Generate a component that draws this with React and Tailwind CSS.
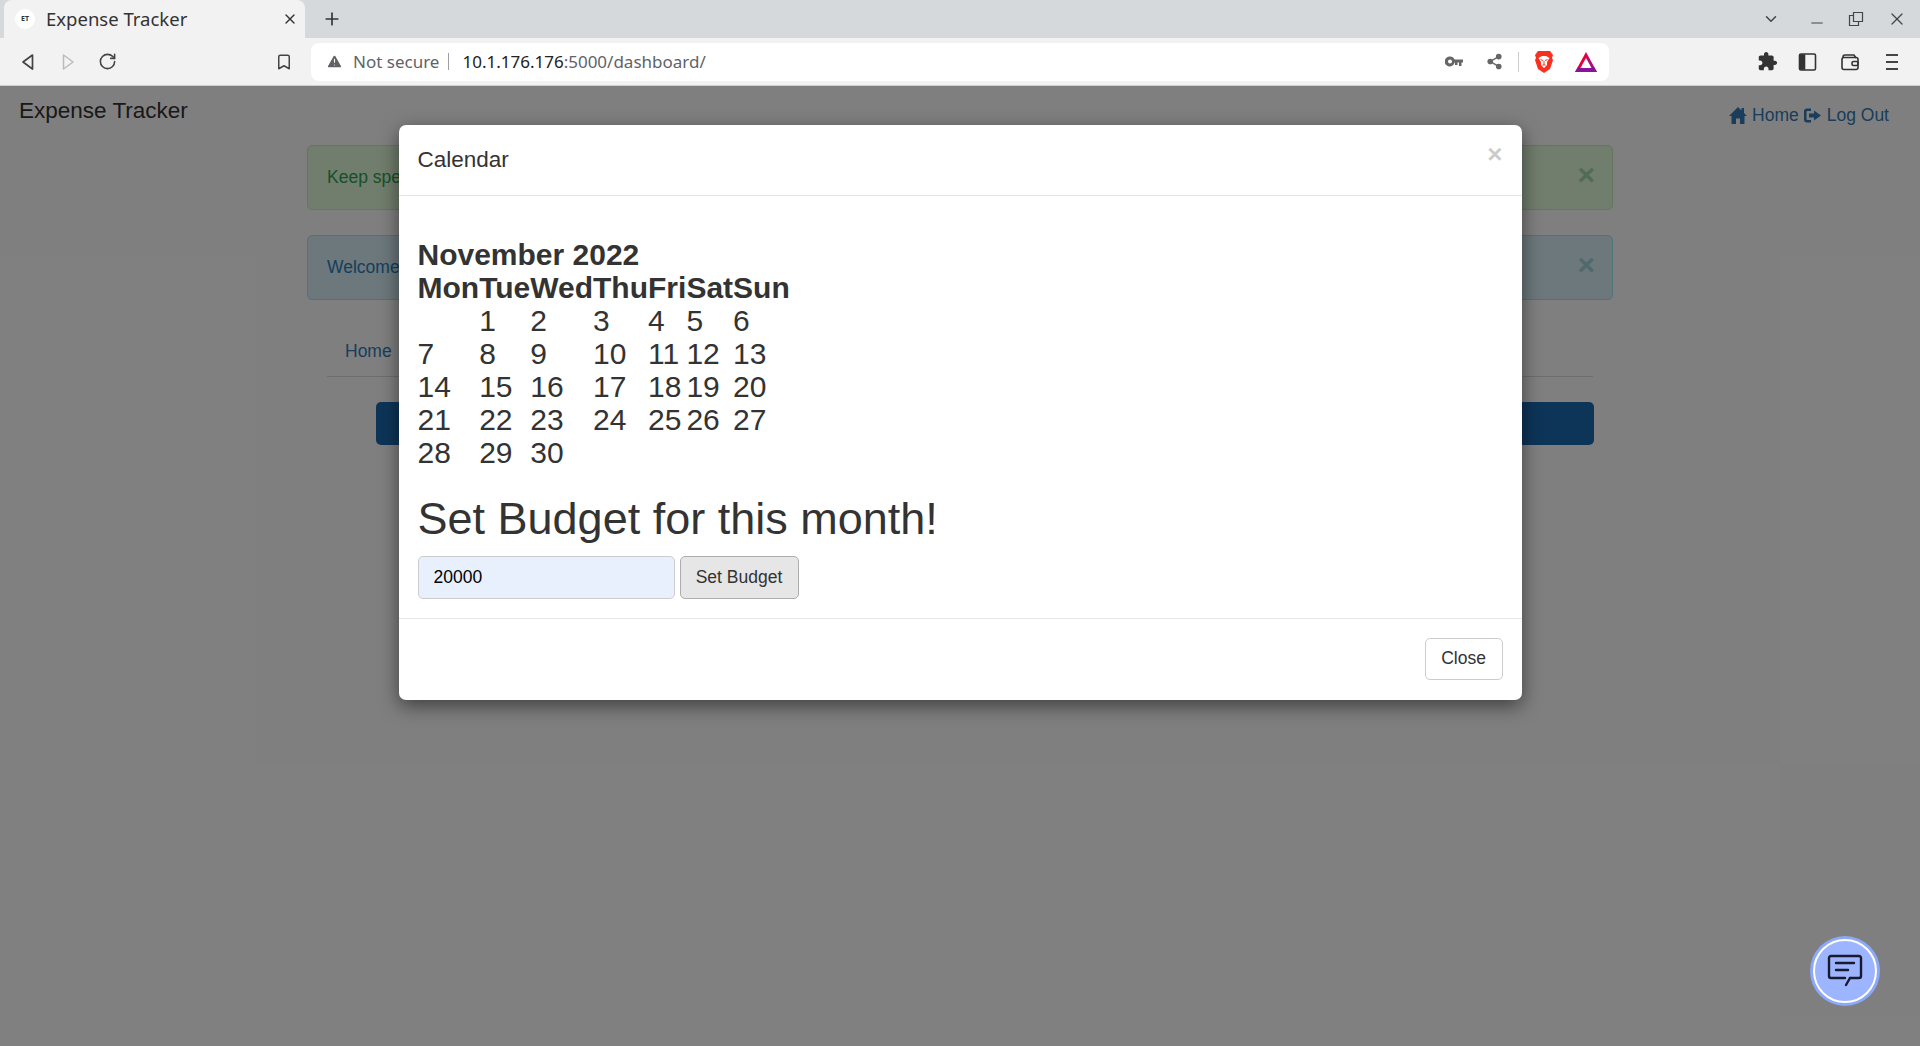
import { ChevronDown, X, Plus, Minus, RotateCw, Bookmark, TriangleAlert, Share2 } from "lucide-react";

const weeks = [
  ["", "1", "2", "3", "4", "5", "6"],
  ["7", "8", "9", "10", "11", "12", "13"],
  ["14", "15", "16", "17", "18", "19", "20"],
  ["21", "22", "23", "24", "25", "26", "27"],
  ["28", "29", "30", "", "", "", ""],
];
const days = ["Mon", "Tue", "Wed", "Thu", "Fri", "Sat", "Sun"];

function BrowserChrome() {
  return (
    <div className="font-['Noto_Sans',sans-serif] text-[#3c4043]">
      {/* Tab strip */}
      <div className="h-[38px] bg-[#d5d9dc] flex items-end">
        <div className="ml-[4px] w-[301px] h-[38px] bg-[#f2f2f2] rounded-t-lg flex items-center pl-[11px] pr-[7px]">
          <div className="w-[20px] h-[20px] rounded-full bg-white flex items-center justify-center text-[7px] font-bold text-[#333]">ET</div>
          <span className="ml-[11px] text-[18.5px] text-[#333] flex-1">Expense Tracker</span>
          <X className="w-[16px] h-[16px] text-[#333]" strokeWidth={2} />
        </div>
        <Plus className="ml-[17px] mb-[9px] w-[20px] h-[20px] text-[#333]" strokeWidth={2} />
        <div className="flex-1" />
        <div className="flex items-center h-[38px] pr-[13px] text-[#444]">
          <ChevronDown className="w-[18px] h-[18px]" strokeWidth={2} />
          <Minus className="ml-[28px] mt-[8px] w-[18px] h-[18px]" strokeWidth={1.5} />
          <svg viewBox="0 0 16 16" className="ml-[22px] w-[16px] h-[16px]" fill="none" stroke="currentColor" strokeWidth="1.2">
            <path d="M5.5 1.5h9v9h-9z" />
            <path d="M5.5 4.5h-4v10h9v-4" />
          </svg>
          <X className="ml-[23px] w-[20px] h-[20px]" strokeWidth={1.5} />
        </div>
      </div>

      {/* Toolbar */}
      <div className="h-[48px] bg-[#f2f2f2] border-b border-[#cfcfcf] flex items-center">
        <svg viewBox="0 0 16 18" className="ml-[20px] w-[16px] h-[18px]" fill="none" stroke="#444" strokeWidth="1.7" strokeLinejoin="round">
          <path d="M12.5 2 3 9l9.5 7z" />
        </svg>
        <svg viewBox="0 0 16 18" className="ml-[24px] w-[16px] h-[18px]" fill="none" stroke="#bbb" strokeWidth="1.5" strokeLinejoin="round">
          <path d="M3.5 2 13 9l-9.5 7z" />
        </svg>
        <RotateCw className="ml-[22px] w-[19px] h-[19px] text-[#444]" strokeWidth={2} />
        <Bookmark className="ml-[158px] w-[18px] h-[18px] text-[#444]" strokeWidth={2} />
        <div className="ml-[18px] w-[1298px] h-[38px] bg-white rounded-lg flex items-center pl-[15px] pr-[11px]">
          <TriangleAlert className="w-[17px] h-[17px] text-white fill-[#5f6368]" strokeWidth={1.5} />
          <span className="ml-[10px] text-[17px] text-[#5f6368]">Not secure</span>
          <span className="ml-[9px] w-px h-[17px] bg-[#9aa0a6]" />
          <span className="ml-[13px] text-[17px] text-[#222]">10.1.176.176<span className="text-[#5f6368]">:5000/dashboard/</span></span>
          <div className="flex-1" />
          <svg viewBox="0 0 18 12" className="w-[18px] h-[12px]" fill="#666">
            <path fillRule="evenodd" d="M5 .5a5 5 0 0 1 4.6 3H18v3h-1.5v3.5h-2.5V6.5h-1.5V9H10V6.5h-.4A5 5 0 1 1 5 .5zm0 3a2 2 0 1 0 0 4 2 2 0 0 0 0-4z" />
          </svg>
          <Share2 className="ml-[23px] w-[17px] h-[17px] text-[#666] fill-[#666]" strokeWidth={2} />
          <span className="ml-[15px] w-px h-[20px] bg-[#ccc]" />
          <svg viewBox="0 0 20 24" className="ml-[15px] w-[20px] h-[24px]">
            <path d="M4 1h12l3 4-1 3 1 2-3 9-6 4-6-4-3-9 1-2-1-3z" fill="#f9301f" />
            <path d="M4.5 8 8 6h4l3.5 2-2.5 4v3l-3 3-3-3v-3z" fill="#fff" />
            <path d="M6.5 9.5l2.5 1M13.5 9.5l-2.5 1M8.5 15h3M10 11v4" stroke="#f9301f" strokeWidth="1" />
          </svg>
          <svg viewBox="0 0 24 22" className="ml-[20px] w-[24px] h-[22px]">
            <defs>
              <linearGradient id="bat" x1="0" x2="1" y1="0" y2="0">
                <stop offset="0.45" stopColor="#e8003d" />
                <stop offset="0.7" stopColor="#a8127f" />
              </linearGradient>
            </defs>
            <path d="M12 1 1 21h22z" fill="url(#bat)" />
            <path d="M1 21l3-5h16l3 5z" fill="#8a129a" />
            <path d="M12 7 6.5 17h11z" fill="#fff" />
          </svg>
        </div>
        {/* extensions puzzle */}
        <svg viewBox="0 0 24 24" className="ml-[148px] w-[21px] h-[21px]" fill="#333">
          <path d="M20.5 11H19V7c0-1.1-.9-2-2-2h-4V3.5C13 2.12 11.88 1 10.5 1S8 2.12 8 3.5V5H4c-1.1 0-1.99.9-1.99 2v3.8H3.5c1.49 0 2.7 1.21 2.7 2.7s-1.21 2.7-2.7 2.7H2V20c0 1.1.9 2 2 2h3.8v-1.5c0-1.49 1.21-2.7 2.7-2.7 1.49 0 2.7 1.21 2.7 2.7V22H17c1.1 0 2-.9 2-2v-4h1.5c1.38 0 2.5-1.12 2.5-2.5S21.88 11 20.5 11z" />
        </svg>
        <svg viewBox="0 0 18 18" className="ml-[20px] w-[19px] h-[18px]" fill="none" stroke="#333" strokeWidth="1.6">
          <rect x="1" y="1" width="16" height="16" rx="1.5" />
          <path d="M1.5 2h4.5v14H1.5z" fill="#333" />
        </svg>
        <svg viewBox="0 0 18 18" className="ml-[23px] w-[20px] h-[18px]" fill="none" stroke="#333" strokeWidth="1.6">
          <path d="M2 5V4a2 2 0 0 1 2-2h9l2 3" />
          <rect x="1" y="4.5" width="16" height="12" rx="2" />
          <rect x="11" y="8.5" width="6" height="4" rx="1.5" />
        </svg>
        <div className="ml-[26px] w-[12px] flex flex-col gap-[5px]">
          <div className="h-[2px] bg-[#444]" />
          <div className="h-[2px] bg-[#444]" />
          <div className="h-[2px] bg-[#444]" />
        </div>
      </div>
    </div>
  );
}

function LogOutGlyph() {
  return (
    <svg viewBox="0 0 18 16" className="w-[18px] h-[17px]" fill="#337ab7">
      <path d="M7 1H3a3 3 0 0 0-3 3v8a3 3 0 0 0 3 3h4v-2.5H3.5a1 1 0 0 1-1-1v-7a1 1 0 0 1 1-1H7z" />
      <path d="M10 3v3H5v4h5v3l7-5z" />
    </svg>
  );
}

function HomeGlyph() {
  return (
    <svg viewBox="0 0 18 17" className="w-[18px] h-[17px]" fill="#337ab7">
      <path d="M9 0 0 9h2.5v8h4.5v-5.5h4V17h4.500V9H18l-3-3V1h-2.500v2.500z" />
    </svg>
  );
}

function Dashboard() {
  return (
    <div className="bg-white h-[960px] text-[17.5px] text-[#333]">
      <div className="flex justify-between h-[59px] pl-[19px] pr-[31px]">
        <span className="text-[22.5px] text-[#333] mt-[8px]">Expense Tracker</span>
        <div className="flex items-center gap-[5px] h-[48px] mt-[5px] text-[#337ab7]">
          <HomeGlyph />
          <span>Home</span>
          <LogOutGlyph />
          <span>Log Out</span>
        </div>
      </div>
      <div className="mx-[307px] flex flex-col gap-[25px]">
        <div className="h-[65px] rounded-[5px] border border-[#c4eeb8] bg-[#e2fadb] text-[#2ea352] flex items-center pl-[19px] pr-[17px]">
          <span className="flex-1">Keep spending</span>
          <span className="text-[30px] font-bold leading-none mb-[6px] text-[#a0d8ac]">×</span>
        </div>
        <div className="h-[65px] rounded-[5px] border border-[#a4e6ee] bg-[#d8f0f8] text-[#2a7fb8] flex items-center pl-[19px] pr-[17px]">
          <span className="flex-1">Welcome</span>
          <span className="text-[30px] font-bold leading-none mb-[6px] text-[#9fd2da]">×</span>
        </div>
      </div>
      <div className="mx-[327px] mt-[25px] h-[52px] border-b border-[#ddd] flex items-center pl-[18px] pt-[1px] text-[#337ab7]">Home</div>
      <div className="ml-[376px] mr-[326px] mt-[25px] h-[43px] rounded-[5px] bg-[#1a6bb0]" />
    </div>
  );
}

function CalendarModal() {
  return (
    <div className="mx-auto mt-[39px] w-[1123px] h-[575px] bg-white rounded-[7px] shadow-[0_6px_19px_rgba(0,0,0,0.5)] text-[#333] flex flex-col">
      <div className="h-[71px] shrink-0 border-b border-[#e5e5e5] flex justify-between pl-[19px] pr-[19px]">
        <span className="text-[22.5px] mt-[18px]">Calendar</span>
        <span className="text-[26px] font-bold leading-none text-black opacity-20 mt-[16px]">×</span>
      </div>
      <div className="flex-1 pl-[19px] pt-[42px]">
        <table className="text-[30px] leading-[33px]">
          <tbody>
            <tr>
              <th colSpan={7} className="p-0 text-left font-bold">November 2022</th>
            </tr>
            <tr>
              {days.map((d) => (
                <th key={d} className="p-0 text-left font-bold">{d}</th>
              ))}
            </tr>
            {weeks.map((w, i) => (
              <tr key={i}>
                {w.map((n, j) => (
                  <td key={j} className="p-0 text-left align-top">{n}</td>
                ))}
              </tr>
            ))}
          </tbody>
        </table>
        <h1 className="text-[45px] leading-[50px] mt-[25px]">Set Budget for this month!</h1>
        <div className="flex gap-[5px] mt-[12px] text-[17.5px]">
          <input
            readOnly
            value="20000"
            className="w-[257px] h-[43px] px-[15px] rounded-[5px] border border-[#ccc] bg-[#e8f0fe] text-black outline-none"
          />
          <button className="h-[43px] w-[119px] rounded-[5px] border border-[#adadad] bg-[#e6e6e6] text-[#333]">Set Budget</button>
        </div>
      </div>
      <div className="h-[82px] shrink-0 border-t border-[#e5e5e5] flex items-center justify-end pr-[19px] pb-[2px]">
        <button className="h-[42px] w-[78px] rounded-[5px] border border-[#ccc] bg-white text-[17.5px] text-[#333]">Close</button>
      </div>
    </div>
  );
}

export default function App() {
  return (
    <div className="w-[1920px] h-[1046px] overflow-hidden relative font-['Liberation_Sans',sans-serif]">
      <BrowserChrome />
      <Dashboard />

      {/* Backdrop + modal */}
      <div className="absolute inset-x-0 bottom-0 top-[86px] bg-black/50">
        <CalendarModal />
      </div>

      {/* Chat bubble */}
      <div className="absolute left-[1810px] top-[936px] w-[70px] h-[70px] rounded-full bg-[#8ca8f8] flex items-center justify-center">
        <div className="w-[64px] h-[64px] rounded-full border-[2px] border-white bg-[#9db4ff] flex items-center justify-center">
          <svg viewBox="0 0 36 34" className="w-[36px] h-[34px]" fill="none" stroke="#1a1a2e" strokeWidth="2.4" strokeLinecap="round" strokeLinejoin="round">
            <path d="M23 24h9a2 2 0 0 0 2-2V4a2 2 0 0 0-2-2H4a2 2 0 0 0-2 2v18a2 2 0 0 0 2 2h14" />
            <path d="M23 24l-4 7" />
            <path d="M9 9h18M9 16h12" />
          </svg>
        </div>
      </div>
    </div>
  );
}
